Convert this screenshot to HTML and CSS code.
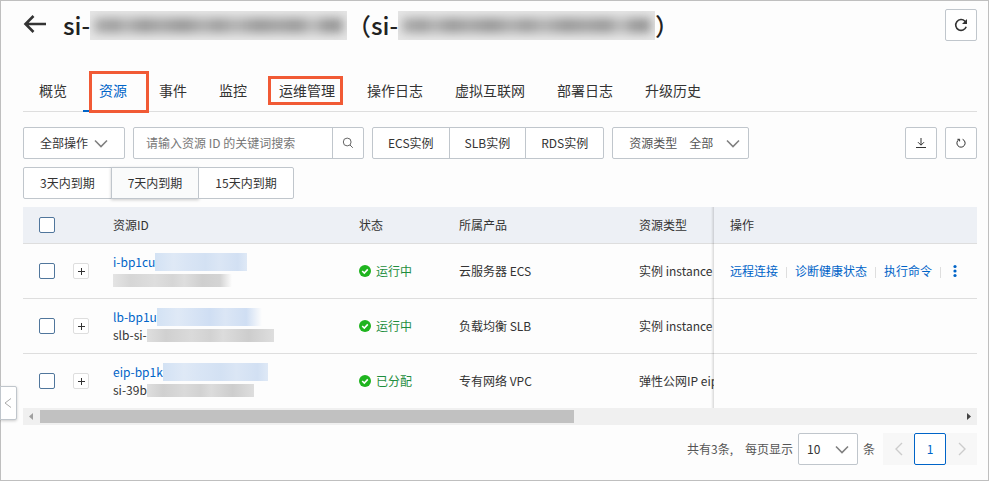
FILE: index.html
```html
<!DOCTYPE html>
<html lang="zh-CN">

<head>
    <meta charset="UTF-8">
    <meta name="viewport" content="width=device-width, initial-scale=1.0">
    <title>资源</title>
    <link rel="stylesheet" href="styles.css">
</head>

<body>
    <div class="page">
        <header class="page-header">
            <button class="back" aria-label="返回">
                <svg width="24" height="20" viewBox="0 0 24 20" fill="none" stroke="currentColor" stroke-width="2.6">
                    <path d="M10.5 1L2.5 9L10.5 17M2.5 9H23"></path>
                </svg>
            </button>
            <h1 class="title">si-<span class="mask mask-title"></span>（si-<span class="mask mask-title"></span>）</h1>
            <button class="icon-btn" aria-label="刷新">
                <svg width="16" height="16" viewBox="0 0 16 16" fill="none" stroke="currentColor" stroke-width="1.6">
                    <path d="M13.2 9.8A5.4 5.4 0 1 1 12 4.2L13 5.4"></path>
                    <path d="M14 2V7H9Z" fill="currentColor" stroke="none"></path>
                </svg>
            </button>
        </header>

        <nav class="tabs">
            <a href="#">概览</a>
            <a href="#" class="active">资源<span class="marker marker-tab"></span></a>
            <a href="#">事件</a>
            <a href="#">监控</a>
            <a href="#">运维管理<span class="marker marker-text"></span></a>
            <a href="#">操作日志</a>
            <a href="#">虚拟互联网</a>
            <a href="#">部署日志</a>
            <a href="#">升级历史</a>
        </nav>

        <div class="toolbar">
            <button class="btn">全部操作
                <svg class="chevron" width="14" height="9" viewBox="0 0 14 9"><path d="M1 1.5L7 7.5L13 1.5"></path></svg>
            </button>
            <form class="search">
                <input type="text" placeholder="请输入资源 ID 的关键词搜索" aria-label="搜索">
                <button type="button" aria-label="搜索">
                    <svg width="12" height="12" viewBox="0 0 12 12" fill="none" stroke="currentColor">
                        <circle cx="5.2" cy="5" r="3.9"></circle>
                        <path d="M8 8L10.8 10.8"></path>
                    </svg>
                </button>
            </form>
            <div class="btn-group products">
                <button class="btn">ECS实例</button>
                <button class="btn">SLB实例</button>
                <button class="btn">RDS实例</button>
            </div>
            <div class="select type-select">
                <label for="type">资源类型</label>
                <select id="type">
                    <option>全部</option>
                </select>
                <svg class="chevron" width="14" height="9" viewBox="0 0 14 9"><path d="M1 1.5L7 7.5L13 1.5"></path></svg>
            </div>
            <div class="tools">
                <button class="icon-btn" aria-label="下载">
                    <svg width="12" height="12" viewBox="0 0 12 12" fill="none" stroke="currentColor">
                        <path d="M6 1V8M3 5.2L6 8.2L9 5.2M1 10.5H11"></path>
                    </svg>
                </button>
                <button class="icon-btn" aria-label="刷新列表">
                    <svg width="12" height="12" viewBox="0 0 12 12" fill="none" stroke="currentColor">
                        <path d="M7.6 2.3A4.1 4.1 0 1 1 4.2 2.4M2.4 2.3H4.6V4.4"></path>
                    </svg>
                </button>
            </div>
        </div>

        <div class="toolbar">
            <div class="btn-group">
                <button class="btn">3天内到期</button>
                <button class="btn raised">7天内到期</button>
                <button class="btn">15天内到期</button>
            </div>
        </div>

        <div class="table-wrap">
            <table>
                <colgroup>
                    <col class="col-check">
                    <col class="col-expand">
                    <col class="col-id">
                    <col class="col-status">
                    <col class="col-product">
                    <col>
                    <col class="col-action">
                </colgroup>
                <thead>
                    <tr>
                        <th><input type="checkbox" aria-label="全选"></th>
                        <th></th>
                        <th>资源ID</th>
                        <th>状态</th>
                        <th>所属产品</th>
                        <th>资源类型</th>
                        <th class="fixed">操作</th>
                    </tr>
                </thead>
                <tbody>
                    <tr>
                        <td><input type="checkbox" aria-label="选择 i-bp1cu"></td>
                        <td class="expand-cell"><button class="expand" aria-label="展开"></button></td>
                        <td>
                            <div class="line"><a href="#">i-bp1cu</a><span class="mask mask-blue"></span></div>
                            <div class="line"><span class="mask mask-gray fade"></span></div>
                        </td>
                        <td>
                            <span class="status"><svg width="12" height="12" viewBox="0 0 12 12"><circle cx="6" cy="6" r="6"></circle><path d="M3.2 6L5.3 8L8.8 4.4"></path></svg>运行中</span>
                        </td>
                        <td>云服务器 ECS</td>
                        <td>实例 instance</td>
                        <td class="fixed">
                            <div class="actions">
                                <a href="#">远程连接</a>
                                <a href="#">诊断健康状态</a>
                                <a href="#">执行命令</a>
                                <button class="more" aria-label="更多">
                                    <svg width="4" height="14" viewBox="0 0 4 14" fill="currentColor">
                                        <circle cx="2" cy="2.5" r="1.6"></circle>
                                        <circle cx="2" cy="7" r="1.6"></circle>
                                        <circle cx="2" cy="11.5" r="1.6"></circle>
                                    </svg>
                                </button>
                            </div>
                        </td>
                    </tr>
                    <tr>
                        <td><input type="checkbox" aria-label="选择 lb-bp1u"></td>
                        <td class="expand-cell"><button class="expand" aria-label="展开"></button></td>
                        <td>
                            <div class="line"><a href="#">lb-bp1u</a><span class="mask mask-blue wide fade"></span></div>
                            <div class="line">slb-si-<span class="mask mask-gray wide"></span></div>
                        </td>
                        <td>
                            <span class="status"><svg width="12" height="12" viewBox="0 0 12 12"><circle cx="6" cy="6" r="6"></circle><path d="M3.2 6L5.3 8L8.8 4.4"></path></svg>运行中</span>
                        </td>
                        <td>负载均衡 SLB</td>
                        <td>实例 instance</td>
                        <td class="fixed"></td>
                    </tr>
                    <tr>
                        <td><input type="checkbox" aria-label="选择 eip-bp1k"></td>
                        <td class="expand-cell"><button class="expand" aria-label="展开"></button></td>
                        <td>
                            <div class="line"><a href="#">eip-bp1k</a><span class="mask mask-blue wide"></span></div>
                            <div class="line">si-39b<span class="mask mask-gray"></span></div>
                        </td>
                        <td>
                            <span class="status"><svg width="12" height="12" viewBox="0 0 12 12"><circle cx="6" cy="6" r="6"></circle><path d="M3.2 6L5.3 8L8.8 4.4"></path></svg>已分配</span>
                        </td>
                        <td>专有网络 VPC</td>
                        <td>弹性公网IP eip</td>
                        <td class="fixed"></td>
                    </tr>
                </tbody>
            </table>
        </div>
        <div class="scrollbar">
            <svg class="prev" width="17" height="17" viewBox="0 0 17 17"><path d="M10 5V12L6 8.5Z"></path></svg>
            <div class="track"><div class="thumb"></div></div>
            <svg class="next" width="17" height="17" viewBox="0 0 17 17"><path d="M7 5V12L11 8.5Z"></path></svg>
        </div>

        <footer class="pagination">
            <span class="total">共有3条,</span>
            <label for="size">每页显示</label>
            <div class="select size-select">
                <select id="size">
                    <option>10</option>
                </select>
                <svg class="chevron" width="14" height="9" viewBox="0 0 14 9"><path d="M1 1.5L7 7.5L13 1.5"></path></svg>
            </div>
            <span>条</span>
            <div class="pager">
                <button disabled aria-label="上一页">
                    <svg width="8" height="14" viewBox="0 0 8 14"><path d="M7 1L1 7L7 13"></path></svg>
                </button>
                <button class="current">1</button>
                <button disabled aria-label="下一页">
                    <svg width="8" height="14" viewBox="0 0 8 14"><path d="M1 1L7 7L1 13"></path></svg>
                </button>
            </div>
        </footer>

        <button class="drawer" aria-label="展开侧栏">
            <svg width="8" height="12" viewBox="0 0 8 12"><path d="M7 1.5L1 6L7 10.5"></path></svg>
        </button>
    </div>
</body>

</html>
```
FILE: styles.css
```css
* {
    box-sizing: border-box;
}

body {
    margin: 0;
    background: #fdfdfd;
    color: #333;
    font-family: "Noto Sans CJK SC", sans-serif;
    font-size: 12px;
    line-height: 18px;
}

button,
input,
select {
    font: inherit;
    color: inherit;
    margin: 0;
}

button {
    cursor: pointer;
}

a {
    color: #0064c8;
    text-decoration: none;
}

.page {
    position: relative;
    min-height: 100vh;
    padding: 8px 11px 8px 22px;
    border: 1px solid #bfbfbf;
}

/* header */
.page-header {
    display: flex;
    align-items: center;
    height: 32px;
}

.back {
    display: flex;
    padding: 0;
    border: 0;
    background: none;
}

.title {
    display: flex;
    align-items: center;
    flex-grow: 1;
    margin: 0 0 0 16px;
    font-size: 24px;
    font-weight: 500;
    line-height: 32px;
    color: #222;
}

.icon-btn {
    display: flex;
    align-items: center;
    justify-content: center;
    width: 32px;
    height: 32px;
    padding: 0;
    border: 1px solid #c0c6cc;
    border-radius: 2px;
    background: #fff;
}

/* blurred out ids */
.mask {
    display: inline-block;
    flex-shrink: 0;
    overflow: hidden;
}

.mask-title {
    width: 257px;
    height: 29px;
    background: #e6e6e6;
}

.mask-title::before {
    content: "";
    display: block;
    height: 15px;
    margin: 7px 4px;
    background: linear-gradient(90deg, #b0b0b0, #9c9c9c 8%, #b4b4b4 13%, #989898 20%, #a8a8a8 27%, #969696 36%, #b0b0b0 44%, #9c9c9c 50%, #b4b4b4 57%, #989898 66%, #a4a4a4 74%, #989898 82%, #c0c0c0 88%, #989898 93%, #989898);
    filter: blur(5px);
}

.mask-blue {
    width: 92px;
    height: 18px;
    background: linear-gradient(90deg, #d3e2f4, #dfe9f6 20%, #d9e5f5 35%, #d3e1f3 55%, #dbe6f5 70%, #d2e0f3 90%, #dfe9f6);
}

.mask-gray {
    width: 107px;
    height: 13px;
    background: linear-gradient(90deg, #dedede, #d0d0d0 15%, #dadada 35%, #d2d2d2 50%, #dcdcdc 60%, #cdcdcd 80%, #dedede);
}

.mask-blue.wide {
    width: 105px;
}

.mask-gray.wide {
    width: 127px;
}

.mask-blue.fade {
    background: linear-gradient(90deg, #d3e2f4, #dfe9f6 20%, #cfdef3 50%, #dbe6f5 65%, #cfdef3 85%, #fdfdfd);
}

.mask-gray.fade {
    width: 119px;
    background: linear-gradient(90deg, #e4e4e4, #d6d6d6 15%, #dedede 35%, #d6d6d6 50%, #dedede 60%, #cfcfcf 75%, #d4d4d4 90%, #fdfdfd);
}

/* tabs */
.tabs {
    display: flex;
    height: 43px;
    margin-top: 28px;
    border-bottom: 1px solid #dedede;
    font-size: 14px;
    line-height: 42px;
}

.tabs a {
    position: relative;
    height: 43px;
    padding: 0 16px;
    color: #333;
}

.tabs .active {
    color: #0064c8;
    border-bottom: 2px solid #0064c8;
}

.marker {
    position: absolute;
    border: 3px solid #f15a35;
}

.marker-tab {
    top: 2px;
    left: 6px;
    width: 60px;
    height: 42px;
}

.marker-text {
    top: 7px;
    left: 5px;
    width: 75px;
    height: 29px;
}

/* toolbar */
.toolbar {
    display: flex;
    gap: 8px;
    margin-top: 8px;
}

.tabs + .toolbar {
    margin-top: 15px;
}

.btn {
    display: flex;
    align-items: center;
    gap: 6px;
    height: 32px;
    padding: 0 16px;
    border: 1px solid #c0c6cc;
    border-radius: 2px;
    background: #fff;
    white-space: nowrap;
}

.chevron {
    fill: none;
    stroke: #808080;
    stroke-width: 1.6;
}

.btn-group {
    display: flex;
}

.btn-group .btn + .btn {
    margin-left: -1px;
}

.btn-group .btn:not(:first-child) {
    border-top-left-radius: 0;
    border-bottom-left-radius: 0;
}

.btn-group .btn:not(:last-child) {
    border-top-right-radius: 0;
    border-bottom-right-radius: 0;
}

.products .btn {
    padding: 0 15px;
}

.btn-group .raised {
    background: #fafbfb;
    box-shadow: 0 1px 3px rgba(0, 0, 0, .2);
}

.search {
    display: flex;
    width: 231px;
    height: 32px;
    border: 1px solid #c0c6cc;
    border-radius: 2px;
    background: #fff;
}

.search input {
    flex: 1;
    min-width: 0;
    padding: 0 12px;
    border: 0;
    background: none;
    outline: none;
}

.search input::placeholder {
    color: #777;
}

.search button {
    display: flex;
    align-items: center;
    justify-content: center;
    width: 31px;
    padding: 0;
    border: 0;
    border-left: 1px solid #c0c6cc;
    background: none;
    color: #666;
}

.select {
    position: relative;
    display: flex;
    align-items: center;
    height: 32px;
    border: 1px solid #c0c6cc;
    border-radius: 2px;
    background: #fff;
    color: #555;
}

.select select {
    appearance: none;
    height: 30px;
    border: 0;
    background: none;
    outline: none;
}

.select .chevron {
    position: absolute;
    right: 8px;
    pointer-events: none;
}

.type-select {
    width: 137px;
}

.type-select label {
    padding-left: 16px;
}

.type-select select {
    flex: 1;
    padding: 0 0 0 12px;
}

.tools {
    display: flex;
    gap: 8px;
    margin-left: auto;
}

/* table */
.table-wrap {
    margin-top: 8px;
    overflow: hidden;
}

table {
    width: 100%;
    min-width: 1640px;
    table-layout: fixed;
    border-spacing: 0;
}

.col-check {
    width: 46px;
}

.col-expand {
    width: 28px;
}

.col-id {
    width: 246px;
}

.col-status {
    width: 100px;
}

.col-product {
    width: 180px;
}

.col-action {
    width: 263px;
}

th,
td {
    padding: 0 0 0 16px;
    border-bottom: 1px solid #dedede;
    text-align: left;
    font-weight: normal;
    white-space: nowrap;
}

th {
    height: 37px;
    background: #edf0f5;
}

td {
    height: 55px;
    background: #fdfdfd;
}

tbody tr:last-child td {
    height: 54px;
    border-bottom: 0;
}

.fixed {
    position: sticky;
    right: 0;
    z-index: 2;
}

.fixed::before {
    content: "";
    position: absolute;
    top: 0;
    bottom: -1px;
    left: -3px;
    width: 3px;
    background: linear-gradient(90deg, rgba(0, 0, 0, 0), rgba(0, 0, 0, .14));
}

input[type="checkbox"] {
    appearance: none;
    display: block;
    width: 16px;
    height: 16px;
    border: 1px solid #50769c;
    border-radius: 2px;
    background: #fff;
}

.expand-cell {
    padding-left: 4px;
}

.expand {
    display: block;
    width: 16px;
    height: 16px;
    padding: 0;
    border: 1px solid #dedede;
    border-radius: 2px;
    background:
        linear-gradient(#333, #333) center / 7px 1px no-repeat,
        linear-gradient(#333, #333) center / 1px 7px no-repeat,
        #fff;
}

.line {
    display: flex;
    align-items: center;
    height: 18px;
}

.status {
    display: flex;
    align-items: center;
    gap: 5px;
    color: #1e8e3e;
}

.status circle {
    fill: #1eb41e;
}

.status path {
    fill: none;
    stroke: #fff;
    stroke-width: 1.6;
}

.actions {
    display: flex;
    align-items: center;
}

.actions a::after {
    content: "";
    display: inline-block;
    width: 1px;
    height: 11px;
    margin: 0 8px;
    background: #dedede;
    vertical-align: -2px;
}

.more {
    display: flex;
    padding: 0 4px;
    border: 0;
    background: none;
    color: #0064c8;
}

/* scrollbar */
.scrollbar {
    display: flex;
    height: 17px;
    background: #f0f0f0;
}

.scrollbar .prev {
    fill: #a0a0a0;
}

.scrollbar .next {
    fill: #444;
}

.track {
    flex: 1;
    padding: 2px 0;
}

.thumb {
    width: 58%;
    height: 13px;
    background: #c1c1c1;
}

/* pagination */
.pagination {
    display: flex;
    align-items: center;
    justify-content: flex-end;
    margin-top: 8px;
    color: #555;
}

.total {
    margin-right: 12px;
}

.size-select {
    width: 60px;
    margin: 0 5px;
    color: #333;
}

.size-select select {
    width: 100%;
    padding: 0 8px;
}

.pager {
    display: flex;
    margin-left: 8px;
}

.pager button {
    display: flex;
    align-items: center;
    justify-content: center;
    width: 31px;
    height: 32px;
    padding: 0;
    border: 0;
    background: #f7f7f7;
}

.pager path,
.drawer path {
    fill: none;
    stroke: #ccc;
    stroke-width: 1.4;
}

.pager .current {
    width: 32px;
    border: 1px solid #0064c8;
    border-radius: 2px;
    background: #fff;
    color: #0064c8;
}

/* side drawer handle */
.drawer {
    position: absolute;
    top: 385px;
    left: -1px;
    display: flex;
    align-items: center;
    width: 17px;
    height: 34px;
    padding: 0 0 0 3px;
    border: 1px solid #c0c6cc;
    border-radius: 0 2px 2px 0;
    background: #fff;
    box-shadow: 0 1px 3px rgba(0, 0, 0, .2);
}

.drawer path {
    stroke: #aaa;
    stroke-width: 1;
}
```
